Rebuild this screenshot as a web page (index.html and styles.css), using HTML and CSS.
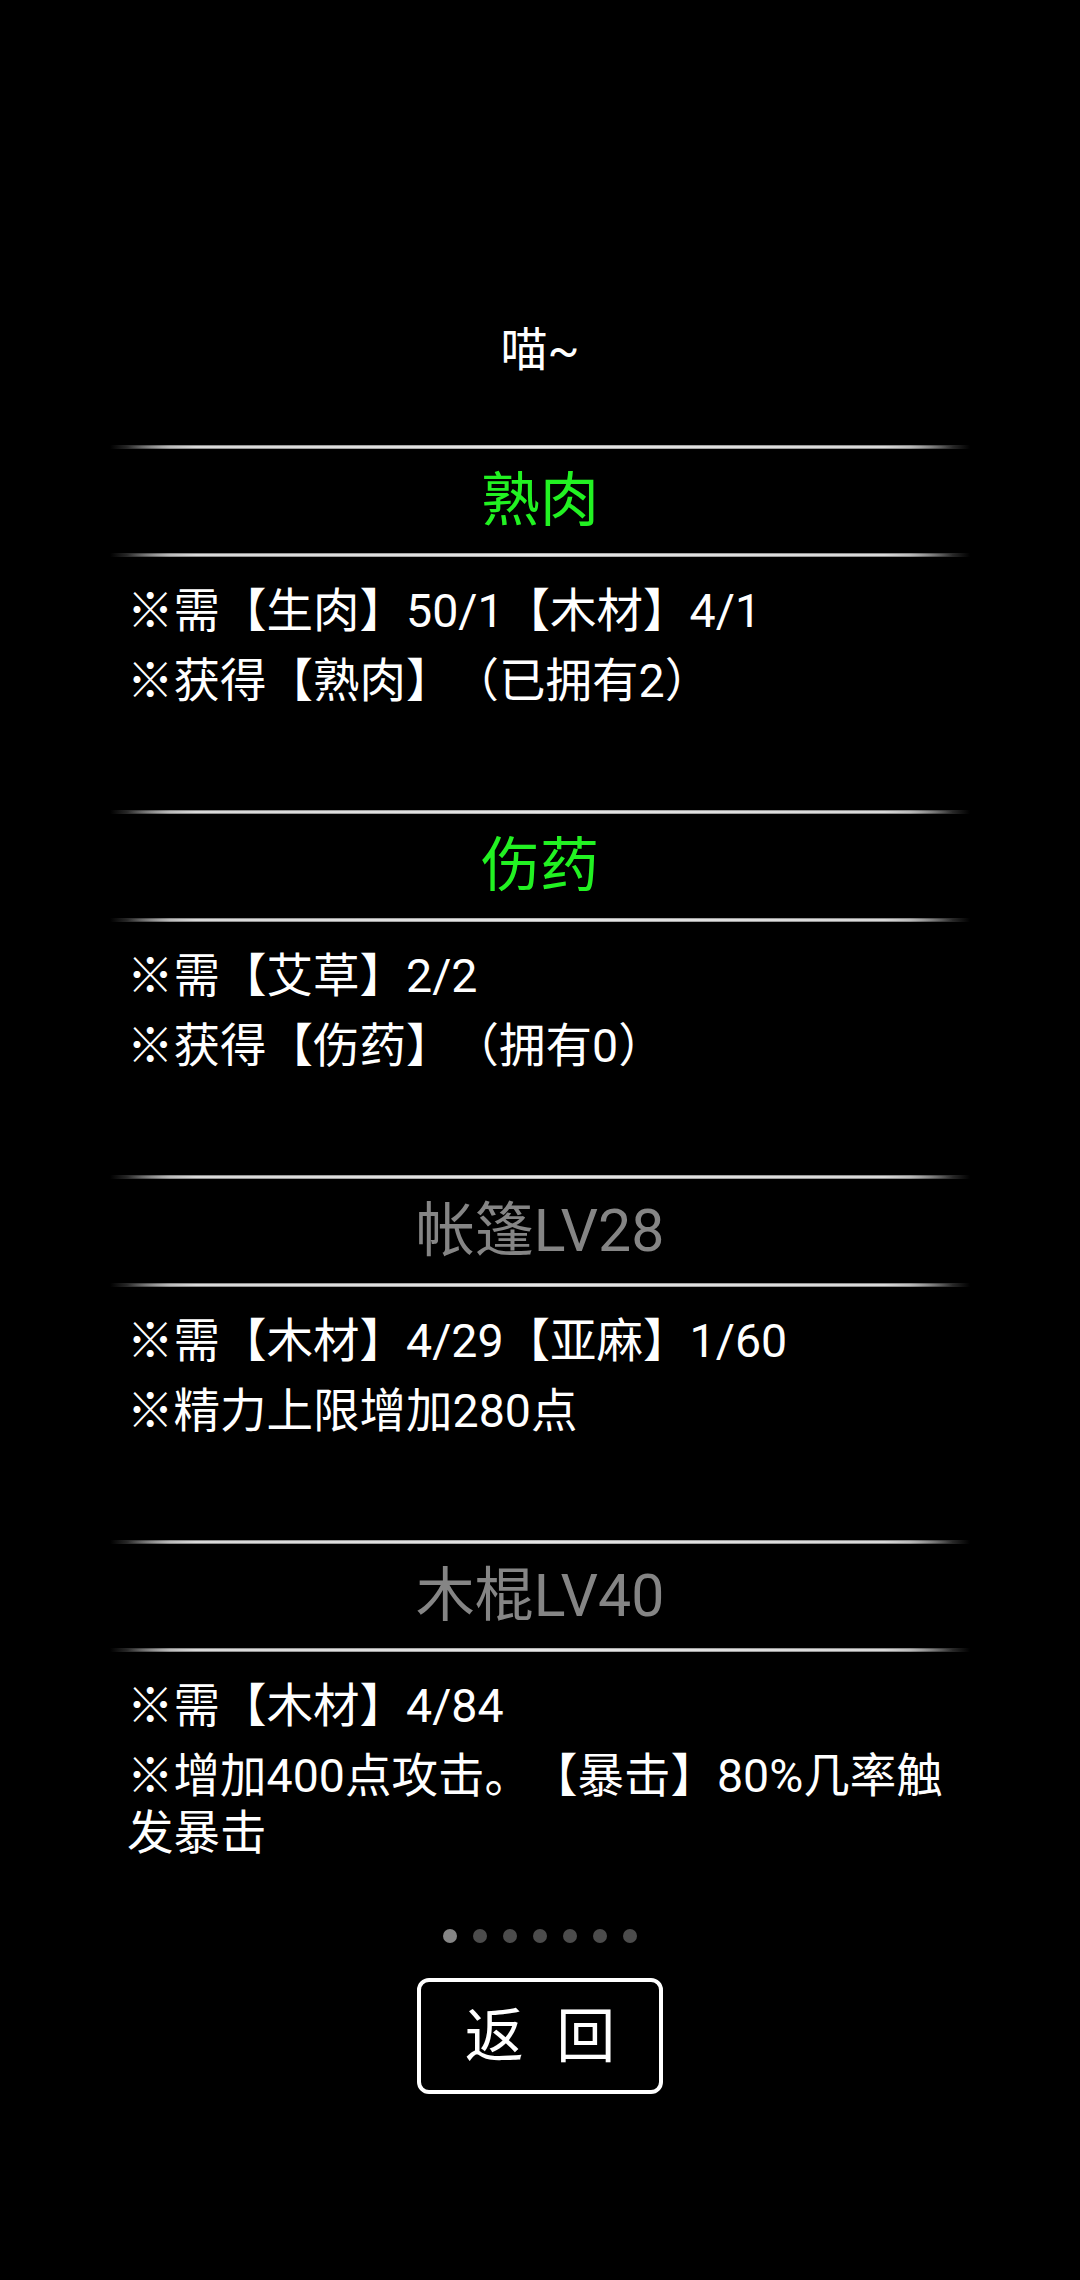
FILE: index.html
```html
<!DOCTYPE html>
<html lang="zh-CN">

<head>
  <meta charset="UTF-8">
  <meta name="viewport" content="width=device-width, initial-scale=1.0">
  <title>制作</title>
  <link rel="stylesheet" href="styles.css">
</head>

<body>
  <main class="panel">
    <p class="panel-say">喵~</p>

    <section class="recipe">
      <div class="recipe-rule"></div>
      <h2 class="recipe-title is-ready">熟肉</h2>
      <div class="recipe-rule"></div>
      <div class="recipe-info">
        <p>※需【生肉】50/1【木材】4/1</p>
        <p>※获得【熟肉】（已拥有2）</p>
      </div>
    </section>

    <section class="recipe">
      <div class="recipe-rule"></div>
      <h2 class="recipe-title is-ready">伤药</h2>
      <div class="recipe-rule"></div>
      <div class="recipe-info">
        <p>※需【艾草】2/2</p>
        <p>※获得【伤药】（拥有0）</p>
      </div>
    </section>

    <section class="recipe">
      <div class="recipe-rule"></div>
      <h2 class="recipe-title">帐篷LV28</h2>
      <div class="recipe-rule"></div>
      <div class="recipe-info">
        <p>※需【木材】4/29【亚麻】1/60</p>
        <p>※精力上限增加280点</p>
      </div>
    </section>

    <section class="recipe">
      <div class="recipe-rule"></div>
      <h2 class="recipe-title">木棍LV40</h2>
      <div class="recipe-rule"></div>
      <div class="recipe-info">
        <p>※需【木材】4/84</p>
        <p>※增加400点攻击。【暴击】80%几率触发暴击</p>
      </div>
    </section>

    <div class="pager">
      <span class="pager-dot is-active"></span>
      <span class="pager-dot"></span>
      <span class="pager-dot"></span>
      <span class="pager-dot"></span>
      <span class="pager-dot"></span>
      <span class="pager-dot"></span>
      <span class="pager-dot"></span>
    </div>

    <button class="back-btn" type="button">返 回</button>
  </main>
</body>

</html>
```

FILE: styles.css
```css
html {
  box-sizing: border-box;
  font-family: Roboto, "Noto Sans CJK SC", sans-serif;
  font-size: 46.5px;
  text-spacing-trim: space-all;
}

*,
*::before,
*::after {
  box-sizing: border-box;
}

body {
  margin: 0;
  min-height: 100vh;
  background-color: #000;
  color: #fff;
}

.panel {
  display: flex;
  flex-direction: column;
  align-items: center;
  width: 860px;
  margin: 0 auto;
  padding-top: 321px;
}

.panel-say {
  margin: 0;
  line-height: 57px;
  font-size: 47px;
  text-align: center;
}

.recipe {
  width: 100%;
  margin-top: 67px;
}

.recipe + .recipe {
  margin-top: 100px;
}

.recipe-rule {
  position: relative;
  height: 4px;
  background: linear-gradient(to right, rgba(150, 150, 150, 0) 0%, #8a8a8a 7%, #b4b4b4 50%, #8a8a8a 93%, rgba(150, 150, 150, 0) 100%);
}

.recipe-rule::after {
  content: "";
  position: absolute;
  left: 0;
  right: 0;
  top: 1px;
  height: 2px;
  background: linear-gradient(to right, rgba(230, 230, 230, 0) 2%, #d8d8d8 10%, #e6e6e6 50%, #d8d8d8 90%, rgba(230, 230, 230, 0) 98%);
}

.recipe-title {
  margin: 0;
  height: 104px;
  line-height: 104px;
  font-size: 59px;
  font-weight: normal;
  text-align: center;
  color: #858585;
}

.recipe-title.is-ready {
  color: #22f222;
}

.recipe-info {
  padding: 26px 8px 0 17px;
}

.recipe-info p {
  margin: 0;
  line-height: 57px;
}

.recipe-info p + p {
  margin-top: 13px;
}

.pager {
  display: flex;
  gap: 16px;
  margin-top: 67px;
}

.pager-dot {
  width: 14px;
  height: 14px;
  border-radius: 50%;
  background-color: #4c4c4c;
}

.pager-dot.is-active {
  background-color: #858585;
}

.back-btn {
  width: 246px;
  height: 116px;
  margin-top: 35px;
  border: 4px solid #fff;
  border-radius: 12px;
  background-color: #000;
  color: #fff;
  font-family: Roboto, "Noto Sans CJK SC", sans-serif;
  font-size: 59px;
  line-height: 1;
  word-spacing: 18px;
  padding: 0;
}
```
